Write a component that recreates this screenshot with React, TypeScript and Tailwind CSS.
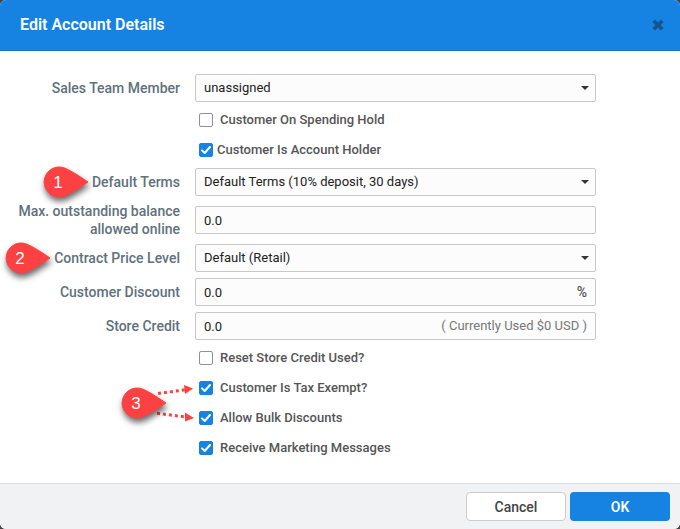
import { useId, useState } from "react";
import type { ReactNode } from "react";

const FIELD =
  "h-7 w-full rounded-xs border border-[#c8c8c8] bg-[#fcfcfc] px-2 text-[13px] text-[#222] outline-none focus:border-[#1683e2]";

function Pin({ value }: { value: number }) {
  return (
    <svg width="60" height="44" viewBox="0 0 60 44" className="overflow-visible" role="img" aria-label={`Step ${value}`}>
      <path
        d="M50 18 Q34 7 27 4.2 A15 15 0 1 0 27 31.8 Q34 29 50 18 Z"
        fill="#fc4143"
        stroke="#fc4143"
        strokeWidth="1"
        strokeLinejoin="round"
        className="drop-shadow-[1px_4px_3px_rgba(0,0,0,0.6)]"
      />
      <text x="20" y="24" textAnchor="middle" fill="#fff" fontSize="17" fontFamily="'Liberation Sans', Arial, sans-serif">
        {value}
      </text>
    </svg>
  );
}

function Row({ label, pin, children }: { label: string; pin?: number; children: (id: string) => ReactNode }) {
  const id = useId();
  return (
    <div className="grid grid-cols-[180px_1fr] items-center gap-x-[15px]">
      <div className="flex justify-end pl-4">
        <div className="relative">
          <label htmlFor={id} className="block text-right text-sm leading-[18px] font-medium text-[#5f717c]">
            {label}
          </label>
          {pin && (
            <div className="pointer-events-none absolute top-1/2 right-full -mt-[18px] -mr-1.5">
              <Pin value={pin} />
            </div>
          )}
        </div>
      </div>
      {children(id)}
    </div>
  );
}

function SelectField({ id, options }: { id: string; options: string[] }) {
  return (
    <div className="relative">
      <select id={id} className={`${FIELD} block appearance-none pr-6`}>
        {options.map((o) => (
          <option key={o}>{o}</option>
        ))}
      </select>
      <svg width="8" height="4" viewBox="0 0 8 4" className="pointer-events-none absolute top-3 right-[7px]" aria-hidden="true">
        <path d="M0 0H8L4 4Z" fill="#333" />
      </svg>
    </div>
  );
}

function TextField({ id, suffix }: { id: string; suffix?: ReactNode }) {
  return (
    <div className="relative">
      <input id={id} type="text" defaultValue="0.0" className={`${FIELD} block`} />
      {suffix && <span className="pointer-events-none absolute inset-y-0 right-[9px] flex items-center">{suffix}</span>}
    </div>
  );
}

function Check({ label, checked = false, tight = false }: { label: string; checked?: boolean; tight?: boolean }) {
  const [on, setOn] = useState(checked);
  return (
    <label className={`flex h-6 w-fit items-center text-[13px] font-medium text-[#555] ${tight ? "gap-1" : "gap-[7px]"}`}>
      <span className="relative size-3.5">
        <input
          type="checkbox"
          checked={on}
          onChange={(e) => setOn(e.target.checked)}
          className="block size-3.5 appearance-none rounded-xs border border-[#8f8f9d] bg-white checked:border-[#1683e2] checked:bg-[#1683e2]"
        />
        {on && (
          <svg viewBox="0 0 14 14" className="pointer-events-none absolute inset-0 size-3.5" aria-hidden="true">
            <path d="M3 7.4L5.7 10L11 4" fill="none" stroke="#fff" strokeWidth="2" strokeLinecap="round" strokeLinejoin="round" />
          </svg>
        )}
      </span>
      {label}
    </label>
  );
}

function CheckGroup({ children }: { children: ReactNode }) {
  return <div className="relative ml-[199px] flex flex-col gap-1.5">{children}</div>;
}

function ArrowCallout() {
  return (
    <div className="pointer-events-none absolute top-[39px] right-full -mr-[7px]">
      <svg width="90" height="44" viewBox="0 0 90 44" className="overflow-visible" aria-hidden="true">
        <g stroke="#fc4143" strokeWidth="3" strokeDasharray="3 3">
          <path d="M42 8.5L69 4.8" />
          <path d="M41 28.3L69 31.8" />
        </g>
        <path d="M68 0L77 3.5L69 9Z" fill="#fc4143" />
        <path d="M69 27.5L78 33L69 36.5Z" fill="#fc4143" />
      </svg>
      <div className="absolute top-0 left-0">
        <Pin value={3} />
      </div>
    </div>
  );
}

export default function App() {
  return (
    <div className="bg-[#444] font-[Roboto,'Liberation_Sans',sans-serif]">
      <div role="dialog" aria-labelledby="dialog-title" className="overflow-hidden rounded-md bg-white">
        <header className="flex h-[51px] items-center justify-between border-b border-[#1576cc] bg-[#1683e2] pr-4 pl-5">
          <h1 id="dialog-title" className="text-base font-semibold text-white">
            Edit Account Details
          </h1>
          <button type="button" aria-label="Close" className="flex size-3 items-center justify-center">
            <svg width="12" height="12" viewBox="0 0 12 12" aria-hidden="true">
              <path d="M3 3L9 9M9 3L3 9" stroke="#15548c" strokeWidth="3.6" strokeLinecap="square" strokeLinejoin="round" />
            </svg>
          </button>
        </header>

        <form className="flex flex-col gap-1.5 py-[23px] pr-[84px]">
          <Row label="Sales Team Member">{(id) => <SelectField id={id} options={["unassigned"]} />}</Row>
          <CheckGroup>
            <Check label="Customer On Spending Hold" />
            <Check label="Customer Is Account Holder" checked tight />
          </CheckGroup>
          <Row label="Default Terms" pin={1}>
            {(id) => <SelectField id={id} options={["Default Terms (10% deposit, 30 days)"]} />}
          </Row>
          <Row label="Max. outstanding balance allowed online">{(id) => <TextField id={id} />}</Row>
          <Row label="Contract Price Level" pin={2}>
            {(id) => <SelectField id={id} options={["Default (Retail)"]} />}
          </Row>
          <Row label="Customer Discount">
            {(id) => <TextField id={id} suffix={<span className="text-sm font-medium text-[#555]">%</span>} />}
          </Row>
          <Row label="Store Credit">
            {(id) => <TextField id={id} suffix={<span className="text-[13px] text-[#777]">( Currently Used $0 USD )</span>} />}
          </Row>
          <CheckGroup>
            <Check label="Reset Store Credit Used?" />
            <Check label="Customer Is Tax Exempt?" checked />
            <Check label="Allow Bulk Discounts" checked />
            <Check label="Receive Marketing Messages" checked />
            <ArrowCallout />
          </CheckGroup>
        </form>

        <footer className="flex justify-end gap-1 border-t border-[#dcdee0] bg-[#f1f2f4] px-2.5 py-2">
          <button type="button" className="h-[29px] w-[100px] rounded-sm border border-[#ccc] bg-white text-sm font-medium text-[#444]">
            Cancel
          </button>
          <button type="button" className="h-[29px] w-[100px] rounded-sm bg-[#1683e2] text-sm font-semibold text-white">
            OK
          </button>
        </footer>
      </div>
    </div>
  );
}
